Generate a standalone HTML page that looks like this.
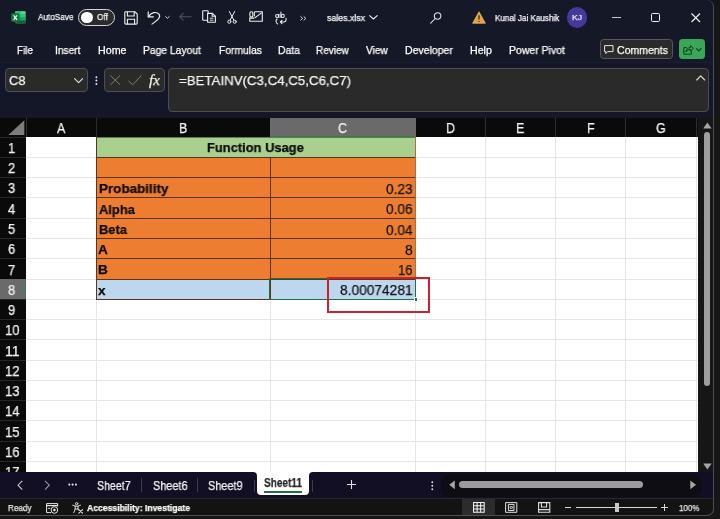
<!DOCTYPE html>
<html lang="en"><head><meta charset="utf-8"><title>sales.xlsx - Excel</title>
<style>
html,body{margin:0;padding:0;}
body{width:720px;height:519px;overflow:hidden;background:#161616;position:relative;font-family:"Liberation Sans",sans-serif;}
.a{position:absolute;}
.t{position:absolute;white-space:nowrap;line-height:20px;transform-origin:0 50%;display:inline-block;will-change:transform;-webkit-text-stroke:0.25px currentColor;}
#win{position:absolute;left:0;top:0;width:714px;height:516px;background:#151827;border-radius:0 7px 7px 0;overflow:hidden;}
#edge{position:absolute;left:0;top:0;width:714px;height:516px;border-radius:0 7px 7px 0;box-sizing:border-box;border-right:1px solid #4a4c58;border-bottom:1px solid #505058;pointer-events:none;}
svg{position:absolute;overflow:visible;}
.gl{position:absolute;background:#d9d9d9;}

</style></head>
<body>
<div id="win">
  <!-- title/ribbon -->
  <div class="a" style="left:0;top:0;width:714px;height:62px;background:#151827;"></div>
  <div class="a" style="left:0;top:62px;width:714px;height:1px;background:#1b1e30;"></div>
  <div class="a" style="left:0;top:63px;width:714px;height:55px;background:#141727;"></div>
  <!-- name box -->
  <div class="a" style="left:5px;top:68px;width:83px;height:24px;box-sizing:border-box;background:#2a2a2a;border:1px solid #4e4e52;border-radius:4px;"></div>
  <div class="a" style="left:104px;top:68px;width:61px;height:24px;box-sizing:border-box;background:#2a2a2a;border:1px solid #4e4e52;border-radius:4px;"></div>
  <div class="a" style="left:168px;top:68px;width:541px;height:44px;box-sizing:border-box;background:#2a2a2a;border:1px solid #4e4e52;border-radius:4px;"></div>

  <!-- excel logo -->
  <svg style="left:10.5px;top:11px" width="15" height="13" viewBox="0 0 15 13">
    <rect x="4.2" y="0.2" width="10.4" height="12.4" rx="1" fill="#21a366"/>
    <rect x="4.2" y="0.2" width="5.2" height="3.2" fill="#33c481"/><rect x="9.4" y="0.2" width="5.2" height="3.2" rx="0.8" fill="#4fd895"/>
    <rect x="4.2" y="3.4" width="5.2" height="3.1" fill="#21a366"/><rect x="9.4" y="3.4" width="5.2" height="3.1" fill="#33c481"/>
    <rect x="4.2" y="6.5" width="5.2" height="3.1" fill="#107c41"/><rect x="9.4" y="6.5" width="5.2" height="3.1" fill="#21a366"/>
    <rect x="4.2" y="9.6" width="10.4" height="3" rx="0.8" fill="#185c37"/>
    <rect x="0.3" y="2.3" width="8" height="8.4" rx="0.9" fill="#107c41"/>
    <path d="M2.6,4.3 L6,8.8 M6,4.3 L2.6,8.8" stroke="#fff" stroke-width="1.15" fill="none"/>
  </svg>
  <!-- autosave toggle -->
  <div class="a" style="left:78px;top:9px;width:36.6px;height:17.4px;box-sizing:border-box;border:1.1px solid #d4d4d4;border-radius:9px;background:#2b2b2d;"></div>
  <div class="a" style="left:81.2px;top:11.8px;width:11.6px;height:11.6px;border-radius:50%;background:#fff;"></div>
  <!-- save -->
  <svg style="left:123.5px;top:10.5px" width="14" height="14" viewBox="0 0 14 14" fill="none" stroke="#f0f0f0" stroke-width="1.1">
    <path d="M1.6,0.8 H11 L13.2,3 V12 Q13.2,13.1 12.1,13.1 H1.9 Q0.8,13.1 0.8,12 V1.7 Q0.8,0.8 1.6,0.8 Z"/>
    <path d="M3.4,0.8 V5 H10.2 V0.8"/>
    <path d="M3.4,13.1 V8.3 H10.6 V13.1"/>
  </svg>
  <!-- undo -->
  <svg style="left:147px;top:10.5px" width="14" height="14" viewBox="0 0 14 14" fill="none" stroke="#f0f0f0" stroke-width="1.15" stroke-linecap="round" stroke-linejoin="round">
    <path d="M1.2,0.9 V5.9 H6.4"/>
    <path d="M1.5,5.6 C4,1.2 9.6,0.2 12,3.2 C14,6 11.5,8.6 5,13.1"/>
  </svg>
  <svg style="left:164.8px;top:15.8px" width="5" height="3" viewBox="0 0 5 3" fill="none" stroke="#e8e8e8" stroke-width="0.95"><path d="M0.4,0.4 L2.4,2.3 L4.4,0.4"/></svg>
  <!-- back (dim) -->
  <svg style="left:178.5px;top:13px" width="13" height="8" viewBox="0 0 13 8" fill="none" stroke="#4e5060" stroke-width="1.1" stroke-linecap="round" stroke-linejoin="round"><path d="M12.2,3.8 H0.8 M4.2,0.4 L0.8,3.8 L4.2,7.2"/></svg>
  <!-- copy -->
  <svg style="left:201.5px;top:10.2px" width="14" height="13.2" viewBox="0 0 14 14" preserveAspectRatio="none" fill="none" stroke="#f0f0f0" stroke-width="1.1" stroke-linejoin="round">
    <path d="M5.2,10.8 H1.4 Q0.7,10.8 0.7,10.1 V1.4 Q0.7,0.7 1.4,0.7 H5.4 Q6.1,0.7 6.1,1.4 V3.2"/>
    <path d="M5.6,3.6 H10.4 L13.4,6.4 V12.4 Q13.4,13.1 12.7,13.1 H6.3 Q5.6,13.1 5.6,12.4 Z"/>
    <path d="M10.2,3.8 V6.6 H13.2"/>
    <path d="M7.8,8.7 H11.4 M7.8,10.8 H11.4" stroke-width="0.95"/>
  </svg>
  <!-- cut -->
  <svg style="left:227px;top:11px" width="10" height="13" viewBox="0 0 10 13" fill="none" stroke="#f0f0f0" stroke-width="1" stroke-linecap="round">
    <path d="M2.3,0.5 L6.9,9.2 M7.7,0.5 L3.1,9.2"/>
    <circle cx="2.3" cy="10.7" r="1.55"/><circle cx="7.7" cy="10.7" r="1.55"/>
  </svg>
  <!-- mail -->
  <svg style="left:248.5px;top:11px" width="14" height="11" viewBox="0 0 14 11" fill="none" stroke="#f0f0f0" stroke-width="1.1" stroke-linejoin="round">
    <path d="M5.4,0.8 H13.3 V10.3 H0.8 V6.6"/>
    <rect x="0.9" y="0.7" width="2.9" height="5.4" rx="1.3"/>
    <path d="M5.3,0.8 V5.6 M0.8,7.1 H5.4 M5.8,6.9 L12.8,1.6"/>
  </svg>
  <!-- ab replace -->
  <svg style="left:274.5px;top:10.5px" width="12" height="14" viewBox="0 0 12 14" fill="none" stroke="#f0f0f0" stroke-width="1.05" stroke-linecap="round" stroke-linejoin="round">
    <circle cx="2.1" cy="5" r="1.45"/><path d="M3.9,3.2 V6.5"/>
    <path d="M5.9,0.9 V6.5"/><circle cx="7.7" cy="4.9" r="1.6"/>
    <path d="M2.1,8 C0.5,9.4 0.6,11.6 2.7,13"/>
    <path d="M11,7.2 C11.6,9.8 10.2,11 8.6,11 H5.5 M7,9.4 L5.3,11 L7,12.7"/>
  </svg>
  <!-- >> -->
  <svg style="left:299.5px;top:15.6px" width="7" height="5" viewBox="0 0 7 5" fill="none" stroke="#e8e8e8" stroke-width="0.95"><path d="M0.5,0.4 L2.6,2.4 L0.5,4.4 M3.7,0.4 L5.8,2.4 L3.7,4.4"/></svg>
  <!-- title chevron -->
  <svg style="left:368.8px;top:15.3px" width="9" height="5" viewBox="0 0 9 5" fill="none" stroke="#f0f0f0" stroke-width="1.05" stroke-linecap="round" stroke-linejoin="round"><path d="M0.6,0.6 L4.4,4 L8.2,0.6"/></svg>
  <!-- search -->
  <svg style="left:430.3px;top:11.6px" width="12" height="12" viewBox="0 0 12 12" fill="none" stroke="#e8e8e8" stroke-width="1.05" stroke-linecap="round"><circle cx="7.6" cy="4" r="3.3"/><path d="M5.2,6.5 L0.7,11.2"/></svg>
  <!-- warning -->
  <svg style="left:472px;top:10.5px" width="14" height="13" viewBox="0 0 14 13"><path d="M7,0.7 L13.4,12.3 H0.6 Z" fill="#e9a23b" stroke="#f3c987" stroke-width="0.6" stroke-linejoin="round"/><path d="M7,4.3 V8.6 M7,9.9 V11" stroke="#3a2a14" stroke-width="1.3"/></svg>
  <!-- avatar -->
  <div class="a" style="left:567px;top:7.4px;width:20.4px;height:20.4px;border-radius:50%;background:#46399a;"></div>
  <!-- window controls -->
  <div class="a" style="left:612px;top:16.6px;width:9px;height:1.2px;background:#c8c8c8;"></div>
  <div class="a" style="left:651px;top:13px;width:9px;height:9px;box-sizing:border-box;border:1.1px solid #f0f0f0;border-radius:1.6px;"></div>
  <svg style="left:691px;top:13px" width="10" height="10" viewBox="0 0 10 10" fill="none" stroke="#f4f4f4" stroke-width="1.1"><path d="M0.5,0.5 L9,9 M9,0.5 L0.5,9"/></svg>
  <!-- comments button -->
  <div class="a" style="left:599.5px;top:39px;width:73px;height:20.2px;box-sizing:border-box;background:#2a2a2c;border:1px solid #58585c;border-radius:3.5px;"></div>
  <svg style="left:604px;top:44.5px" width="10" height="10" viewBox="0 0 10 10" fill="none" stroke="#f0f0f0" stroke-width="0.95" stroke-linejoin="round"><path d="M0.6,0.6 H9 V6.6 H3.6 L1.8,8.6 V6.6 H0.6 Z"/></svg>
  <!-- share button -->
  <div class="a" style="left:679px;top:39px;width:26.2px;height:20.2px;background:#3aa657;border-radius:3.5px;"></div>
  <svg style="left:683px;top:44px" width="11" height="11" viewBox="0 0 11 11" fill="none" stroke="#0e3b1d" stroke-width="0.95" stroke-linejoin="round" stroke-linecap="round"><path d="M3.6,3.6 H0.8 V10.2 H8.4 V7.6"/><path d="M3,7.6 C3.2,5 5,3.6 7.4,3.6 V1.6 L10.4,4.4 L7.4,7.2 V5.4 C5.6,5.4 4.2,6 3,7.6 Z"/></svg>
  <svg style="left:696.3px;top:47.6px" width="6" height="4" viewBox="0 0 6 4" fill="none" stroke="#0e3b1d" stroke-width="1.1" stroke-linecap="round" stroke-linejoin="round"><path d="M0.6,0.6 L2.8,2.8 L5,0.6"/></svg>
  <!-- name box chevron -->
  <svg style="left:74.3px;top:77.6px" width="10" height="6" viewBox="0 0 10 6" fill="none" stroke="#e8e8e8" stroke-width="1.05" stroke-linecap="round" stroke-linejoin="round"><path d="M0.6,0.6 L4.6,4.6 L8.6,0.6"/></svg>
  <!-- dots -->
  <svg style="left:95px;top:75.6px" width="3" height="10" viewBox="0 0 3 10"><circle cx="1.4" cy="1.2" r="1" fill="#e6e6e6"/><circle cx="1.4" cy="4.6" r="1" fill="#e6e6e6"/><circle cx="1.4" cy="8" r="1" fill="#e6e6e6"/></svg>
  <!-- cancel / enter -->
  <svg style="left:110px;top:75.4px" width="11" height="11" viewBox="0 0 11 11" fill="none" stroke="#7e7e82" stroke-width="1"><path d="M0.5,0.5 L10,9.8 M10,0.5 L0.5,9.8"/></svg>
  <svg style="left:127.5px;top:75.4px" width="14" height="11" viewBox="0 0 14 11" fill="none" stroke="#7e7e82" stroke-width="1" stroke-linejoin="round"><path d="M0.5,5.8 L4.6,9.8 L13.4,0.6"/></svg>
  <!-- formula bar collapse caret -->
  <svg style="left:696px;top:74.6px" width="10" height="6" viewBox="0 0 10 6" fill="none" stroke="#e0e0e0" stroke-width="1.1" stroke-linecap="round" stroke-linejoin="round"><path d="M0.7,5 L4.7,0.9 L8.7,5"/></svg>
  <!-- grid -->
  <div id="grid" class="a" style="left:0;top:118px;width:698px;height:354px;background:#fff;overflow:hidden;">
<div class="a" style="left:95.50px;top:19.00px;width:1.00px;height:354.00px;background:#e5e5e5;"></div>
<div class="a" style="left:269.50px;top:19.00px;width:1.00px;height:354.00px;background:#e5e5e5;"></div>
<div class="a" style="left:415.00px;top:19.00px;width:1.00px;height:354.00px;background:#e5e5e5;"></div>
<div class="a" style="left:485.00px;top:19.00px;width:1.00px;height:354.00px;background:#e5e5e5;"></div>
<div class="a" style="left:555.00px;top:19.00px;width:1.00px;height:354.00px;background:#e5e5e5;"></div>
<div class="a" style="left:625.00px;top:19.00px;width:1.00px;height:354.00px;background:#e5e5e5;"></div>
<div class="a" style="left:695.50px;top:19.00px;width:1.00px;height:354.00px;background:#e5e5e5;"></div>
<div class="a" style="left:26.00px;top:38.96px;width:698.00px;height:1.00px;background:#e5e5e5;"></div>
<div class="a" style="left:26.00px;top:59.22px;width:698.00px;height:1.00px;background:#e5e5e5;"></div>
<div class="a" style="left:26.00px;top:79.48px;width:698.00px;height:1.00px;background:#e5e5e5;"></div>
<div class="a" style="left:26.00px;top:99.74px;width:698.00px;height:1.00px;background:#e5e5e5;"></div>
<div class="a" style="left:26.00px;top:120.00px;width:698.00px;height:1.00px;background:#e5e5e5;"></div>
<div class="a" style="left:26.00px;top:140.26px;width:698.00px;height:1.00px;background:#e5e5e5;"></div>
<div class="a" style="left:26.00px;top:160.52px;width:698.00px;height:1.00px;background:#e5e5e5;"></div>
<div class="a" style="left:26.00px;top:180.78px;width:698.00px;height:1.00px;background:#e5e5e5;"></div>
<div class="a" style="left:26.00px;top:201.04px;width:698.00px;height:1.00px;background:#e5e5e5;"></div>
<div class="a" style="left:26.00px;top:221.30px;width:698.00px;height:1.00px;background:#e5e5e5;"></div>
<div class="a" style="left:26.00px;top:241.56px;width:698.00px;height:1.00px;background:#e5e5e5;"></div>
<div class="a" style="left:26.00px;top:261.82px;width:698.00px;height:1.00px;background:#e5e5e5;"></div>
<div class="a" style="left:26.00px;top:282.08px;width:698.00px;height:1.00px;background:#e5e5e5;"></div>
<div class="a" style="left:26.00px;top:302.34px;width:698.00px;height:1.00px;background:#e5e5e5;"></div>
<div class="a" style="left:26.00px;top:322.60px;width:698.00px;height:1.00px;background:#e5e5e5;"></div>
<div class="a" style="left:26.00px;top:342.86px;width:698.00px;height:1.00px;background:#e5e5e5;"></div>
<div class="a" style="left:26.00px;top:363.12px;width:698.00px;height:1.00px;background:#e5e5e5;"></div>
<div class="a" style="left:96.00px;top:18.70px;width:320.00px;height:20.76px;background:#a9d08e;"></div>
<div class="a" style="left:96.00px;top:39.46px;width:320.00px;height:121.56px;background:#ed7d31;"></div>
<div class="a" style="left:96.00px;top:161.02px;width:320.00px;height:20.26px;background:#bdd7ee;"></div>
<div class="a" style="left:96.00px;top:18.70px;width:320.00px;height:1.00px;background:#5c7a4a;"></div>
<div class="a" style="left:96.00px;top:38.96px;width:320.00px;height:1.00px;background:#5a3517;"></div>
<div class="a" style="left:96.00px;top:59.22px;width:320.00px;height:1.00px;background:#5a3517;"></div>
<div class="a" style="left:96.00px;top:79.48px;width:320.00px;height:1.00px;background:#5a3517;"></div>
<div class="a" style="left:96.00px;top:99.74px;width:320.00px;height:1.00px;background:#5a3517;"></div>
<div class="a" style="left:96.00px;top:120.00px;width:320.00px;height:1.00px;background:#5a3517;"></div>
<div class="a" style="left:96.00px;top:140.26px;width:320.00px;height:1.00px;background:#5a3517;"></div>
<div class="a" style="left:96.00px;top:160.52px;width:320.00px;height:1.00px;background:#5a3517;"></div>
<div class="a" style="left:96.00px;top:180.78px;width:320.00px;height:1.00px;background:#5a3517;"></div>
<div class="a" style="left:95.50px;top:18.70px;width:1.00px;height:163.08px;background:#5a3517;"></div>
<div class="a" style="left:269.50px;top:39.46px;width:1.00px;height:141.82px;background:#5a3517;"></div>
<div class="a" style="left:415.00px;top:18.70px;width:1.00px;height:163.08px;background:#a8703f;"></div>
<div class="a" style="left:269.00px;top:160.02px;width:147.00px;height:21.76px;box-sizing:border-box;border:1.5px solid #1e7145;"></div>
<div class="a" style="left:413.50px;top:179.28px;width:4.50px;height:4.50px;background:#1e7145;border:1px solid #fff;box-sizing:border-box;"></div>
<div class="a" style="left:327px;top:158.8px;width:103px;height:36px;box-sizing:border-box;border:2.7px solid #c9212e;"></div>
<div class="a" style="left:0.00px;top:0.00px;width:698.00px;height:19.00px;background:#0a0a0a;"></div>
<div class="a" style="left:0.00px;top:19.00px;width:26.00px;height:354.00px;background:#0a0a0a;"></div>
<div class="a" style="left:95.50px;top:0.00px;width:1.00px;height:19.00px;background:#2e2e2e;"></div>
<div class="a" style="left:269.50px;top:0.00px;width:1.00px;height:19.00px;background:#2e2e2e;"></div>
<div class="a" style="left:415.00px;top:0.00px;width:1.00px;height:19.00px;background:#2e2e2e;"></div>
<div class="a" style="left:485.00px;top:0.00px;width:1.00px;height:19.00px;background:#2e2e2e;"></div>
<div class="a" style="left:555.00px;top:0.00px;width:1.00px;height:19.00px;background:#2e2e2e;"></div>
<div class="a" style="left:625.00px;top:0.00px;width:1.00px;height:19.00px;background:#2e2e2e;"></div>
<div class="a" style="left:695.50px;top:0.00px;width:1.00px;height:19.00px;background:#2e2e2e;"></div>
<div class="a" style="left:25.50px;top:0.00px;width:1.00px;height:19.00px;background:#2e2e2e;"></div>
<div class="a" style="left:0.00px;top:18.70px;width:26.00px;height:1.00px;background:#262626;"></div>
<div class="a" style="left:0.00px;top:38.96px;width:26.00px;height:1.00px;background:#262626;"></div>
<div class="a" style="left:0.00px;top:59.22px;width:26.00px;height:1.00px;background:#262626;"></div>
<div class="a" style="left:0.00px;top:79.48px;width:26.00px;height:1.00px;background:#262626;"></div>
<div class="a" style="left:0.00px;top:99.74px;width:26.00px;height:1.00px;background:#262626;"></div>
<div class="a" style="left:0.00px;top:120.00px;width:26.00px;height:1.00px;background:#262626;"></div>
<div class="a" style="left:0.00px;top:140.26px;width:26.00px;height:1.00px;background:#262626;"></div>
<div class="a" style="left:0.00px;top:160.52px;width:26.00px;height:1.00px;background:#262626;"></div>
<div class="a" style="left:0.00px;top:180.78px;width:26.00px;height:1.00px;background:#262626;"></div>
<div class="a" style="left:0.00px;top:201.04px;width:26.00px;height:1.00px;background:#262626;"></div>
<div class="a" style="left:0.00px;top:221.30px;width:26.00px;height:1.00px;background:#262626;"></div>
<div class="a" style="left:0.00px;top:241.56px;width:26.00px;height:1.00px;background:#262626;"></div>
<div class="a" style="left:0.00px;top:261.82px;width:26.00px;height:1.00px;background:#262626;"></div>
<div class="a" style="left:0.00px;top:282.08px;width:26.00px;height:1.00px;background:#262626;"></div>
<div class="a" style="left:0.00px;top:302.34px;width:26.00px;height:1.00px;background:#262626;"></div>
<div class="a" style="left:0.00px;top:322.60px;width:26.00px;height:1.00px;background:#262626;"></div>
<div class="a" style="left:0.00px;top:342.86px;width:26.00px;height:1.00px;background:#262626;"></div>
<div class="a" style="left:0.00px;top:363.12px;width:26.00px;height:1.00px;background:#262626;"></div>
<div class="a" style="left:270.00px;top:0.00px;width:145.50px;height:19.20px;background:#6a6a6a;"></div>
<div class="a" style="left:270.00px;top:18.20px;width:145.50px;height:1.00px;background:#3c7a52;"></div>
<div class="a" style="left:0.00px;top:161.02px;width:26.00px;height:20.26px;background:#6a6a6a;"></div>
<div class="a" style="left:24.80px;top:161.02px;width:1.20px;height:20.26px;background:#2f7d50;"></div>
<svg style="left:0;top:0" width="26" height="19"><polygon points="24.3,2.2 24.3,17 8.3,17" fill="#7d7d7d"/></svg>
</div>

  <!-- vertical scrollbar -->
  <div class="a" style="left:698px;top:117.5px;width:16px;height:354.5px;background:#161616;"></div>
  <svg style="left:702.5px;top:121.5px" width="9" height="7"><polygon points="4.4,0.4 8.6,6.4 0.2,6.4" fill="#a6a6a6"/></svg>
  <div class="a" style="left:703.5px;top:131.5px;width:6.6px;height:254px;background:#9f9f9f;border-radius:3.3px;"></div>
  <svg style="left:702.5px;top:462.5px" width="9" height="7"><polygon points="0.2,0.4 8.6,0.4 4.4,6.4" fill="#a6a6a6"/></svg>
  <!-- sheet tab bar -->
  <div class="a" style="left:0;top:472px;width:714px;height:26px;background:#120e23;"></div>
  <div class="a" style="left:441px;top:473.5px;width:261px;height:23.5px;background:#0e0d14;border-radius:9px;"></div>
  <div class="a" style="left:459px;top:481px;width:183.5px;height:7.4px;background:#9c9c9c;border-radius:3.7px;"></div>
  <svg style="left:449px;top:480px" width="7" height="10"><polygon points="0.2,4.8 5.8,0.4 5.8,9.2" fill="#a6a6a6"/></svg>
  <svg style="left:690px;top:480px" width="7" height="10"><polygon points="6,4.8 0.3,0.4 0.3,9.2" fill="#a6a6a6"/></svg>
  <svg style="left:431px;top:480.5px" width="3" height="10"><circle cx="1.3" cy="1.2" r="0.95" fill="#ddd"/><circle cx="1.3" cy="4.7" r="0.95" fill="#ddd"/><circle cx="1.3" cy="8.2" r="0.95" fill="#ddd"/></svg>
  <!-- tab nav -->
  <svg style="left:17px;top:479.5px" width="7" height="11"><polyline points="5.3,0.8 1,5.2 5.3,9.6" fill="none" stroke="#c8c8c8" stroke-width="1.1"/></svg>
  <svg style="left:44px;top:479.5px" width="7" height="11"><polyline points="1,0.8 5.3,5.2 1,9.6" fill="none" stroke="#9a9a9a" stroke-width="1.1"/></svg>
  <svg style="left:68px;top:482.5px" width="10" height="4"><circle cx="1.3" cy="1.6" r="1.05" fill="#e6e6e6"/><circle cx="4.6" cy="1.6" r="1.05" fill="#e6e6e6"/><circle cx="7.9" cy="1.6" r="1.05" fill="#e6e6e6"/></svg>
  <div class="a" style="left:141px;top:478px;width:1px;height:14px;background:#3c3a52;"></div>
  <div class="a" style="left:197px;top:478px;width:1px;height:14px;background:#3c3a52;"></div>
  <div class="a" style="left:253.5px;top:478px;width:1px;height:14px;background:#3c3a52;"></div>
  <div class="a" style="left:312px;top:478px;width:1px;height:14px;background:#3c3a52;"></div>
  <div class="a" style="left:253px;top:472px;width:60px;height:5px;background:#fff;"></div>
  <div class="a" style="left:247px;top:472px;width:10px;height:8px;background:#120e23;border-radius:0 4px 0 0;"></div>
  <div class="a" style="left:309px;top:472px;width:10px;height:8px;background:#120e23;border-radius:4px 0 0 0;"></div>
  <div class="a" style="left:257px;top:472px;width:52px;height:23px;background:#fff;border-radius:0 0 4px 4px;"></div>
  <div class="a" style="left:264px;top:491px;width:38px;height:1.6px;background:#1e7145;"></div>
  <svg style="left:346.5px;top:480px" width="10" height="10"><path d="M4.5,0 V9 M0,4.5 H9" fill="none" stroke="#e0e0e0" stroke-width="1.1"/></svg>
  <!-- status bar -->
  <div class="a" style="left:0;top:498px;width:714px;height:18px;background:#131313;"></div>
  <div class="a" style="left:0;top:498px;width:714px;height:1px;background:#26262c;"></div>
  <div class="a" style="left:462px;top:499px;width:33px;height:16px;background:#2c2c2c;"></div>
  <svg style="left:46px;top:502.5px" width="13" height="11" viewBox="0 0 13 11" fill="none" stroke="#e6e6e6" stroke-width="1">
    <path d="M5.2,9.6 H0.6 V0.6 H11.6 V3.6"/><path d="M0.6,2.6 H11.6" stroke-width="1.2"/><path d="M2.2,5.4 H4.2"/>
    <circle cx="8.4" cy="7" r="3.3"/><circle cx="8.4" cy="7" r="1.3" fill="#e6e6e6" stroke="none"/>
  </svg>
  <svg style="left:72px;top:501.8px" width="12" height="12" viewBox="0 0 12 12" fill="none" stroke="#e6e6e6" stroke-width="0.95" stroke-linecap="round" stroke-linejoin="round">
    <circle cx="4.6" cy="1.7" r="1.2"/>
    <path d="M0.7,3.2 L3.2,4.2 H6 L8.5,3.2 M3.2,4.2 V7 L1.8,10.6 M6,4.2 V7 L6.6,8.2 M3.2,7 H6"/>
    <path d="M6.8,7.6 L10.6,11.2 M10.6,7.6 L6.8,11.2" stroke-width="1.05"/>
  </svg>
  <svg style="left:472.5px;top:501.6px" width="12" height="11" viewBox="0 0 12 11" fill="none" stroke="#f2f2f2" stroke-width="1.05">
    <path d="M0.55,0.55 H11.2 V10.3 H0.55 Z M4.1,0.5 V10.3 M7.65,0.5 V10.3 M0.5,3.8 H11.2 M0.5,7.05 H11.2"/>
  </svg>
  <svg style="left:505.3px;top:501.6px" width="13" height="11" viewBox="0 0 13 11" fill="none" stroke="#e0e0e0" stroke-width="1">
    <path d="M0.6,0.6 H11.8 V10.3 H0.6 Z"/><path d="M3.4,2.4 H9 V8.5 H3.4 Z"/><path d="M5,4.6 H7.4 V6.4 H5 Z" stroke-width="0.8"/>
  </svg>
  <svg style="left:538px;top:501.6px" width="13" height="11" viewBox="0 0 13 11" fill="none" stroke="#e0e0e0" stroke-width="1.1">
    <path d="M0.6,0.6 H11.8 V10.3 H0.6 Z"/><path d="M3.4,0.6 V5 H8.6 V0.6 M0.6,7.6 H11.8" />
  </svg>
  <div class="a" style="left:565px;top:507px;width:6px;height:1px;background:#d8d8d8;"></div>
  <div class="a" style="left:576px;top:507px;width:81px;height:1px;background:#d8d8d8;"></div>
  <div class="a" style="left:614.5px;top:502.5px;width:4.5px;height:9.5px;background:#c8c8c8;"></div>
  <svg style="left:661px;top:504px" width="7" height="7"><path d="M3.5,0 V7 M0,3.5 H7" fill="none" stroke="#d8d8d8" stroke-width="1"/></svg>
</div>
<div id="edge"></div>

<div id="texts">
<span class="t" style='left:37.50px;top:7.48px;font-size:9.3px;color:#f6f6f6;transform:scaleX(0.8793);'>AutoSave</span>
<span class="t" style='left:97.00px;top:7.41px;font-size:9.2px;color:#f0f0f0;transform:scaleX(0.9026);'>Off</span>
<span class="t" style='left:327.00px;top:7.74px;font-size:9.4px;color:#fafafa;transform:scaleX(0.9354);'>sales.xlsx</span>
<span class="t" style='left:495.00px;top:7.65px;font-size:9.1px;color:#f8f8f8;transform:scaleX(0.8881);'>Kunal Jai Kaushik</span>
<span class="t" style='left:572.00px;top:7.83px;font-size:8.0px;color:#e8e6f5;transform:scaleX(1.0738);'>KJ</span>
<span class="t" style='left:16.50px;top:39.93px;font-size:10.6px;color:#ffffff;transform:scaleX(0.9343);'>File</span>
<span class="t" style='left:54.50px;top:39.93px;font-size:10.6px;color:#ffffff;transform:scaleX(0.9600);'>Insert</span>
<span class="t" style='left:97.50px;top:39.93px;font-size:10.6px;color:#ffffff;transform:scaleX(1.0066);'>Home</span>
<span class="t" style='left:143.00px;top:39.93px;font-size:10.6px;color:#ffffff;transform:scaleX(0.9717);'>Page Layout</span>
<span class="t" style='left:219.00px;top:39.93px;font-size:10.6px;color:#ffffff;transform:scaleX(0.9718);'>Formulas</span>
<span class="t" style='left:278.00px;top:39.93px;font-size:10.6px;color:#ffffff;transform:scaleX(0.9778);'>Data</span>
<span class="t" style='left:316.00px;top:39.93px;font-size:10.6px;color:#ffffff;transform:scaleX(0.9445);'>Review</span>
<span class="t" style='left:365.50px;top:39.93px;font-size:10.6px;color:#ffffff;transform:scaleX(0.9591);'>View</span>
<span class="t" style='left:404.50px;top:39.93px;font-size:10.6px;color:#ffffff;transform:scaleX(0.9910);'>Developer</span>
<span class="t" style='left:470.00px;top:39.93px;font-size:10.6px;color:#ffffff;transform:scaleX(1.0057);'>Help</span>
<span class="t" style='left:509.00px;top:39.93px;font-size:10.6px;color:#ffffff;transform:scaleX(0.9879);'>Power Pivot</span>
<span class="t" style='left:617.00px;top:39.93px;font-size:10.6px;color:#ffffff;transform:scaleX(0.9927);'>Comments</span>
<span class="t" style='left:9.30px;top:70.85px;font-size:13.7px;color:#f5f5f5;transform:scaleX(0.9429);'>C8</span>
<span class="t" style='left:149.30px;top:70.07px;font-size:15.5px;color:#f4f4f4;font-style:italic;font-family:"Liberation Serif", serif;transform:scaleX(0.9743);'>fx</span>
<span class="t" style='left:178.50px;top:70.85px;font-size:13.7px;color:#f5f5f5;transform:scaleX(0.9697);'>=BETAINV(C3,C4,C5,C6,C7)</span>
<span class="t" style='left:56.89px;top:118.31px;font-size:14.4px;color:#f2f2f2;transform:scaleX(0.8600);'>A</span>
<span class="t" style='left:178.89px;top:118.31px;font-size:14.4px;color:#f2f2f2;transform:scaleX(0.8600);'>B</span>
<span class="t" style='left:338.29px;top:118.31px;font-size:14.4px;color:#f2f2f2;transform:scaleX(0.8600);'>C</span>
<span class="t" style='left:446.04px;top:118.31px;font-size:14.4px;color:#f2f2f2;transform:scaleX(0.8600);'>D</span>
<span class="t" style='left:516.39px;top:118.31px;font-size:14.4px;color:#f2f2f2;transform:scaleX(0.8600);'>E</span>
<span class="t" style='left:586.71px;top:118.31px;font-size:14.4px;color:#f2f2f2;transform:scaleX(0.8600);'>F</span>
<span class="t" style='left:655.94px;top:118.31px;font-size:14.4px;color:#f2f2f2;transform:scaleX(0.8600);'>G</span>
<span class="t" style='left:207.00px;top:137.99px;font-size:13.6px;color:#0a0a0a;font-weight:700;transform:scaleX(0.9492);'>Function Usage</span>
<span class="t" style='left:99.00px;top:179.31px;font-size:13.6px;color:#0a0a0a;font-weight:700;transform:scaleX(0.9876);'>Probability</span>
<span class="t" style='left:99.00px;top:199.57px;font-size:13.6px;color:#0a0a0a;font-weight:700;transform:scaleX(0.9489);'>Alpha</span>
<span class="t" style='left:99.00px;top:219.83px;font-size:13.6px;color:#0a0a0a;font-weight:700;transform:scaleX(0.9451);'>Beta</span>
<span class="t" style='left:98.34px;top:240.09px;font-size:13.6px;color:#0a0a0a;font-weight:700;'>A</span>
<span class="t" style='left:97.84px;top:260.35px;font-size:13.6px;color:#0a0a0a;font-weight:700;'>B</span>
<span class="t" style='left:98.47px;top:280.61px;font-size:13.6px;color:#0a0a0a;font-weight:700;'>x</span>
<span class="t" style='left:386.00px;top:179.17px;font-size:14px;color:#141414;transform:scaleX(0.9725);'>0.23</span>
<span class="t" style='left:386.00px;top:199.43px;font-size:14px;color:#141414;transform:scaleX(0.9725);'>0.06</span>
<span class="t" style='left:386.00px;top:219.69px;font-size:14px;color:#141414;transform:scaleX(0.9725);'>0.04</span>
<span class="t" style='left:404.84px;top:239.95px;font-size:14px;color:#141414;'>8</span>
<span class="t" style='left:398.00px;top:260.21px;font-size:14px;color:#141414;transform:scaleX(0.9317);'>16</span>
<span class="t" style='left:340.00px;top:280.47px;font-size:14px;color:#141414;transform:scaleX(0.9806);'>8.00074281</span>
<span class="t" style='left:97.00px;top:475.94px;font-size:12.3px;color:#f4f4f4;transform:scaleX(0.8590);'>Sheet7</span>
<span class="t" style='left:152.50px;top:475.94px;font-size:12.3px;color:#f4f4f4;transform:scaleX(0.8846);'>Sheet6</span>
<span class="t" style='left:208.00px;top:475.94px;font-size:12.3px;color:#f4f4f4;transform:scaleX(0.8846);'>Sheet9</span>
<span class="t" style='left:264.00px;top:473.34px;font-size:12.3px;color:#262626;font-weight:700;transform:scaleX(0.8161);'>Sheet11</span>
<span class="t" style='left:7.50px;top:498.01px;font-size:9.2px;color:#e8e8e8;transform:scaleX(0.8847);'>Ready</span>
<span class="t" style='left:86.50px;top:497.81px;font-size:9.2px;color:#ffffff;font-weight:700;transform:scaleX(0.9380);'>Accessibility: Investigate</span>
<span class="t" style='left:679.00px;top:498.01px;font-size:9.2px;color:#e8e8e8;transform:scaleX(0.8723);'>100%</span>
<div class="a" style="left:0;top:0;width:698px;height:472px;overflow:hidden;">
<span class="t" style='left:8.30px;top:137.95px;font-size:14px;color:#f2f2f2;transform:scaleX(0.9216);'>1</span>
<span class="t" style='left:8.30px;top:158.21px;font-size:14px;color:#f2f2f2;transform:scaleX(0.9216);'>2</span>
<span class="t" style='left:8.30px;top:178.47px;font-size:14px;color:#f2f2f2;transform:scaleX(0.9216);'>3</span>
<span class="t" style='left:8.30px;top:198.73px;font-size:14px;color:#f2f2f2;transform:scaleX(0.9216);'>4</span>
<span class="t" style='left:8.30px;top:218.99px;font-size:14px;color:#f2f2f2;transform:scaleX(0.9216);'>5</span>
<span class="t" style='left:8.30px;top:239.25px;font-size:14px;color:#f2f2f2;transform:scaleX(0.9216);'>6</span>
<span class="t" style='left:8.30px;top:259.51px;font-size:14px;color:#f2f2f2;transform:scaleX(0.9216);'>7</span>
<span class="t" style='left:8.30px;top:279.77px;font-size:14px;color:#f2f2f2;transform:scaleX(0.9216);'>8</span>
<span class="t" style='left:8.30px;top:300.03px;font-size:14px;color:#f2f2f2;transform:scaleX(0.9216);'>9</span>
<span class="t" style='left:5.10px;top:320.29px;font-size:14px;color:#f2f2f2;transform:scaleX(0.9382);'>10</span>
<span class="t" style='left:5.10px;top:340.55px;font-size:14px;color:#f2f2f2;transform:scaleX(1.0026);'>11</span>
<span class="t" style='left:5.10px;top:360.81px;font-size:14px;color:#f2f2f2;transform:scaleX(0.9382);'>12</span>
<span class="t" style='left:5.10px;top:381.07px;font-size:14px;color:#f2f2f2;transform:scaleX(0.9382);'>13</span>
<span class="t" style='left:5.10px;top:401.33px;font-size:14px;color:#f2f2f2;transform:scaleX(0.9382);'>14</span>
<span class="t" style='left:5.10px;top:421.59px;font-size:14px;color:#f2f2f2;transform:scaleX(0.9382);'>15</span>
<span class="t" style='left:5.10px;top:441.85px;font-size:14px;color:#f2f2f2;transform:scaleX(0.9382);'>16</span>
<span class="t" style='left:5.10px;top:462.11px;font-size:14px;color:#f2f2f2;transform:scaleX(0.9382);'>17</span>
</div>
</div>
</body></html>
